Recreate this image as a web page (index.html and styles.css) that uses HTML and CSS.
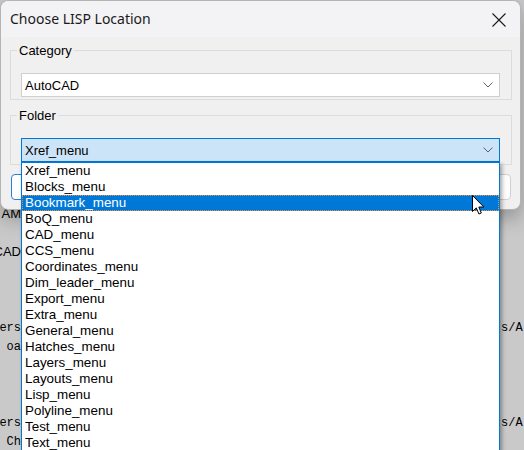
FILE: index.html
```html
<!DOCTYPE html>
<html lang="en">
<head>
<meta charset="utf-8">
<title>Choose LISP Location</title>
<link rel="stylesheet" href="styles.css">
</head>
<body>
  <!-- application behind the dialog -->
  <div class="desk">
    <div class="desk-row sans"><span class="desk-left">AM</span><span class="desk-right"></span></div>
    <div class="desk-row"><span class="desk-left"></span><span class="desk-right"></span></div>
    <div class="desk-row sans"><span class="desk-left">CAD</span><span class="desk-right"></span></div>
    <div class="desk-row"><span class="desk-left"></span><span class="desk-right"></span></div>
    <div class="desk-row"><span class="desk-left"></span><span class="desk-right"></span></div>
    <div class="desk-row"><span class="desk-left"></span><span class="desk-right"></span></div>
    <div class="desk-row mono"><span class="desk-left">ers</span><span class="desk-right">s/A</span></div>
    <div class="desk-row mono"><span class="desk-left">oa</span><span class="desk-right"></span></div>
    <div class="desk-row"><span class="desk-left"></span><span class="desk-right"></span></div>
    <div class="desk-row"><span class="desk-left"></span><span class="desk-right"></span></div>
    <div class="desk-row"><span class="desk-left"></span><span class="desk-right"></span></div>
    <div class="desk-row mono"><span class="desk-left">ers</span><span class="desk-right">s/A</span></div>
    <div class="desk-row mono"><span class="desk-left">Ch</span><span class="desk-right"></span></div>
  </div>

  <div class="dialog">
    <div class="titlebar">
      <span class="title">Choose LISP Location</span>
      <svg class="close" width="14" height="14" viewBox="0 0 14 14">
        <path d="M0.5 0.5 L13.5 13.5 M13.5 0.5 L0.5 13.5" stroke="#1a1a1a" stroke-width="1.1" fill="none"/>
      </svg>
    </div>

    <div class="content">
      <fieldset class="group">
        <legend>Category</legend>
        <div class="combo">
          <span>AutoCAD</span>
          <svg class="chev" width="10" height="6" viewBox="0 0 10 6"><path d="M0.5 0.5 L5 5 L9.5 0.5" stroke="#606060" fill="none"/></svg>
        </div>
      </fieldset>

      <fieldset class="group">
        <legend>Folder</legend>
        <div class="combo combo-open">
          <span>Xref_menu</span>
          <svg class="chev" width="10" height="6" viewBox="0 0 10 6"><path d="M0.5 0.5 L5 5 L9.5 0.5" stroke="#606060" fill="none"/></svg>
          <ul class="droplist">
            <li>Xref_menu</li>
            <li>Blocks_menu</li>
            <li class="selected">Bookmark_menu</li>
            <li>BoQ_menu</li>
            <li>CAD_menu</li>
            <li>CCS_menu</li>
            <li>Coordinates_menu</li>
            <li>Dim_leader_menu</li>
            <li>Export_menu</li>
            <li>Extra_menu</li>
            <li>General_menu</li>
            <li>Hatches_menu</li>
            <li>Layers_menu</li>
            <li>Layouts_menu</li>
            <li>Lisp_menu</li>
            <li>Polyline_menu</li>
            <li>Test_menu</li>
            <li>Text_menu</li>
          </ul>
        </div>
      </fieldset>

      <div class="buttons">
        <button class="btn btn-default">OK</button>
        <button class="btn">Cancel</button>
      </div>
    </div>
  </div>

  <svg class="cursor" width="14" height="21" viewBox="0 0 14 21">
    <path d="M0.5 0.5 L0.5 16.5 L4.3 12.9 L6.9 19 L9.3 18 L6.8 12 L11.8 12 Z" fill="#fff" stroke="#000" stroke-width="1" stroke-linejoin="miter"/>
  </svg>
</body>
</html>
```

FILE: styles.css
```css
* {
  box-sizing: border-box;
}

body {
  margin: 0;
  width: 524px;
  height: 450px;
  overflow: hidden;
  position: relative;
  background: #c9c9c9;
  font-family: "Liberation Sans", Arial, sans-serif;
  font-size: 13px;
  color: #000;
}

/* background application grid */
.desk {
  padding-top: 204px;
}

.desk-row {
  height: 19px;
  display: flex;
  justify-content: space-between;
  align-items: center;
  white-space: nowrap;
}

.desk-row.sans {
  font-family: "Liberation Sans", Arial, sans-serif;
  font-size: 13px;
}

.desk-row.mono {
  font-family: "Liberation Mono", "DejaVu Sans Mono", monospace;
  font-size: 12px;
}

.desk-left {
  width: 22px;
  display: flex;
  justify-content: flex-end;
  padding-right: 1px;
}

.desk-right {
  width: 24px;
  padding-left: 1px;
}

/* dialog window */
.dialog {
  position: absolute;
  left: 0;
  top: 0;
  width: 521px;
  height: 210px;
  background: #f0f0f0;
  border: 1px solid #b4b4b4;
  border-radius: 8px;
  box-shadow: 0 8px 20px rgba(0, 0, 0, 0.28);
}

.titlebar {
  height: 36px;
  display: flex;
  align-items: center;
  justify-content: space-between;
  padding: 0 14px 0 9px;
  background: #f3f3f5;
  border-radius: 8px 8px 0 0;
}

.title {
  font-family: "Noto Sans", "Open Sans", sans-serif;
  font-size: 14px;
  color: #1a1a1a;
  padding-bottom: 1px;
}

.close {
  display: block;
  margin-top: 1px;
}

.content {
  padding: 6px 8px 0 9px;
}

.group {
  margin: 0;
  width: 502px;
  border: 1px solid #dcdcdc;
  padding: 15px 11px 2px 10px;
}

.group + .group {
  margin-top: 8px;
}

.group legend {
  padding: 0 2px;
  margin-left: -4px;
  line-height: 15px;
  font-size: 13px;
}

.combo {
  position: relative;
  width: 479px;
  height: 24px;
  display: flex;
  align-items: center;
  justify-content: space-between;
  padding: 0 6px 0 3px;
  background: #fff;
  border: 1px solid #cfcfcf;
}

.combo-open {
  background: #cce4f7;
  border-color: #0078d7;
}

.chev {
  display: block;
}

/* open drop-down list */
.droplist {
  position: absolute;
  left: -1px;
  top: 23px;
  width: 479px;
  margin: 0;
  padding: 0;
  list-style: none;
  background: #fff;
  border: 1px solid #0078d7;
  box-shadow: 2px 2px 4px rgba(0, 0, 0, 0.35);
  z-index: 5;
  font-size: 13.4px;
}

.droplist li {
  height: 16px;
  line-height: 16px;
  padding-left: 3px;
  white-space: nowrap;
}

.droplist li.selected {
  background: #0078d7;
  color: #fff;
  outline: 1px dotted #f0903a;
  outline-offset: -1px;
}

.buttons {
  display: flex;
  gap: 10px;
  margin-top: 9px;
  padding: 0 1px 0 1px;
}

.btn {
  flex: 1;
  height: 26px;
  background: #fdfdfd;
  border: 1px solid #d0d0d0;
  border-radius: 4px;
  font-family: "Liberation Sans", Arial, sans-serif;
  font-size: 13px;
}

.btn-default {
  border-color: #2f7fd0;
}

.cursor {
  position: absolute;
  left: 472px;
  top: 195px;
  z-index: 10;
}
```
